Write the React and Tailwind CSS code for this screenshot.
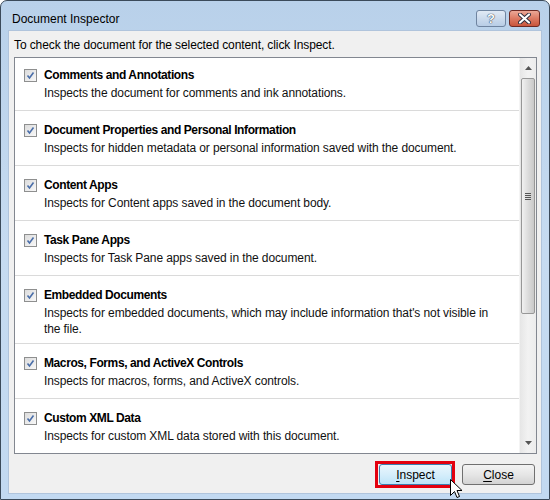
import React from 'react';

const items = [
  { title: 'Comments and Annotations', desc: ['Inspects the document for comments and ink annotations.'] },
  { title: 'Document Properties and Personal Information', desc: ['Inspects for hidden metadata or personal information saved with the document.'] },
  { title: 'Content Apps', desc: ['Inspects for Content apps saved in the document body.'] },
  { title: 'Task Pane Apps', desc: ['Inspects for Task Pane apps saved in the document.'] },
  {
    title: 'Embedded Documents',
    desc: ["Inspects for embedded documents, which may include information that's not visible in", 'the file.'],
  },
  { title: 'Macros, Forms, and ActiveX Controls', desc: ['Inspects for macros, forms, and ActiveX controls.'] },
  { title: 'Custom XML Data', desc: ['Inspects for custom XML data stored with this document.'] },
];

const CheckBox = () => (
  <div className="w-[13px] h-[13px] border border-[#8e8f8f] bg-gradient-to-br from-[#dcdcdc] to-[#f8f8f8] flex items-center justify-center shrink-0">
    <svg width="9" height="9" viewBox="0 0 9 9">
      <path d="M1.5 4.5 L3.5 7 L7.5 1.5" fill="none" stroke="#4a6ea9" strokeWidth="1.6" />
    </svg>
  </div>
);

const Row = ({ item, last, tight }) => (
  <div
    className={`pl-[9px] pt-[11px] ${tight ? 'pb-[6px]' : 'pb-[9px]'} ${last ? '' : 'border-b border-[#dadada]'}`}
  >
    <div className="flex items-center h-[16px]">
      <CheckBox />
      <span className="ml-[7px] font-bold text-[12px] tracking-[-0.4px] leading-[16px] text-black whitespace-nowrap">
        {item.title}
      </span>
    </div>
    <div className="mt-[2px] pl-[20px] text-[12px] tracking-[-0.1px] leading-[16px] text-[#111] whitespace-nowrap">
      {item.desc.map((l) => (
        <div key={l}>{l}</div>
      ))}
    </div>
  </div>
);

const ScrollBar = () => (
  <div className="w-[17px] shrink-0 flex flex-col bg-gradient-to-r from-[#e6e6e6] via-[#f2f2f2] to-[#ececec] border-l border-[#f4f4f4]">
    <div className="h-[20px] flex items-center justify-center">
      <svg width="7" height="4" viewBox="0 0 7 4">
        <path d="M0 4 L3.5 0 L7 4 Z" fill="#555" />
      </svg>
    </div>
    <div className="mx-[1px] h-[236px] rounded-[2px] border border-[#979797] bg-gradient-to-r from-[#f1f1f1] via-[#dcdcdc] to-[#c9c9c9] flex items-center justify-center">
      <div className="flex flex-col gap-[1px]">
        <div className="w-[6px] h-[1px] bg-[#555]" />
        <div className="w-[6px] h-[1px] bg-[#555]" />
        <div className="w-[6px] h-[1px] bg-[#555]" />
        <div className="w-[6px] h-[1px] bg-[#555]" />
      </div>
    </div>
    <div className="flex-1" />
    <div className="h-[20px] flex items-center justify-center">
      <svg width="7" height="4" viewBox="0 0 7 4">
        <path d="M0 0 L3.5 4 L7 0 Z" fill="#555" />
      </svg>
    </div>
  </div>
);

const Cursor = () => (
  <svg className="absolute left-[450px] top-[479px]" width="13" height="21" viewBox="0 0 13 21">
    <path
      d="M0.5 0.5 L0.5 16.5 L4.5 12.5 L7 18.5 L9.5 17.5 L7 11.5 L12 11.5 Z"
      fill="#fff"
      stroke="#000"
      strokeWidth="1"
      strokeLinejoin="round"
    />
  </svg>
);

export default function App() {
  return (
    <div className="relative w-[550px] h-[500px] bg-white overflow-hidden font-['Liberation_Sans',Arial,sans-serif]">
      <div className="w-[550px] h-[500px] flex flex-col rounded-t-[7px] border border-[#3b4a5a] bg-gradient-to-b from-[#b9d1ea] via-[#c6dbf1] to-[#c2d9f1] px-[7px] pb-[5px]">
        <div className="h-[29px] flex items-start justify-between pl-[4px] pr-[2px]">
          <div className="pt-[10px] text-[12px] leading-[16px] text-black">Document Inspector</div>
          <div className="pt-[9px] flex gap-[3px]">
            <div className="w-[30px] h-[17px] rounded-[3px] border border-[#6f84a0] bg-gradient-to-b from-[#e1eaf5] via-[#ccdbed] to-[#b8cde6] flex items-center justify-center">
              <span className="text-white font-bold text-[13px] leading-none [text-shadow:0_0_1px_#1c2a40,0_0_1px_#1c2a40]">?</span>
            </div>
            <div className="w-[31px] h-[17px] rounded-[3px] border border-[#6d2a24] bg-gradient-to-b from-[#eba897] via-[#dc7a63] to-[#c9553c] flex items-center justify-center">
              <svg width="13" height="11" viewBox="0 0 13 11">
                <path d="M2 1.5 L11 9.5 M11 1.5 L2 9.5" stroke="#2b2b3b" strokeWidth="4" strokeLinecap="round" />
                <path d="M2 1.5 L11 9.5 M11 1.5 L2 9.5" stroke="#fff" strokeWidth="2.2" strokeLinecap="round" />
              </svg>
            </div>
          </div>
        </div>

        <div className="flex-1 flex flex-col bg-[#f0f0f0] border border-[#b0c4dc]">
          <div className="pt-[6px] pl-[5px] text-[12px] tracking-[-0.1px] leading-[16px] text-black">
            To check the document for the selected content, click Inspect.
          </div>

          <div className="mt-[4px] ml-[5px] w-[523px] h-[397px] border border-[#828790] bg-white flex">
            <div className="flex-1 overflow-hidden">
              <div className="-mt-[2px]">
                {items.map((item, i) => (
                  <Row key={item.title} item={item} last={i === items.length - 1} tight={i === 4} />
                ))}
              </div>
            </div>
            <ScrollBar />
          </div>

          <div className="mt-[10px] flex justify-end gap-[10px] pr-[6px]">
            <div className="relative flex">
              <button className="flex items-center justify-center w-[73px] h-[21px] rounded-[3px] border border-[#3c7fb1] bg-gradient-to-b from-[#eaf6fd] via-[#d6eefb] to-[#bee4f8] text-[12px] leading-[16px] text-black">
                <span className="underline underline-offset-2">I</span>nspect
              </button>
              <div className="absolute -left-[4px] -right-[3px] -top-[3px] -bottom-[3px] border-[3px] border-[#e3000f] pointer-events-none" />
            </div>
            <button className="flex items-center justify-center w-[73px] h-[21px] rounded-[3px] border border-[#707070] bg-gradient-to-b from-[#f3f3f3] via-[#e6e6e6] to-[#d3d3d3] text-[12px] leading-[16px] text-black">
              <span className="underline underline-offset-2">C</span>lose
            </button>
          </div>
        </div>
      </div>
      <Cursor />
    </div>
  );
}
